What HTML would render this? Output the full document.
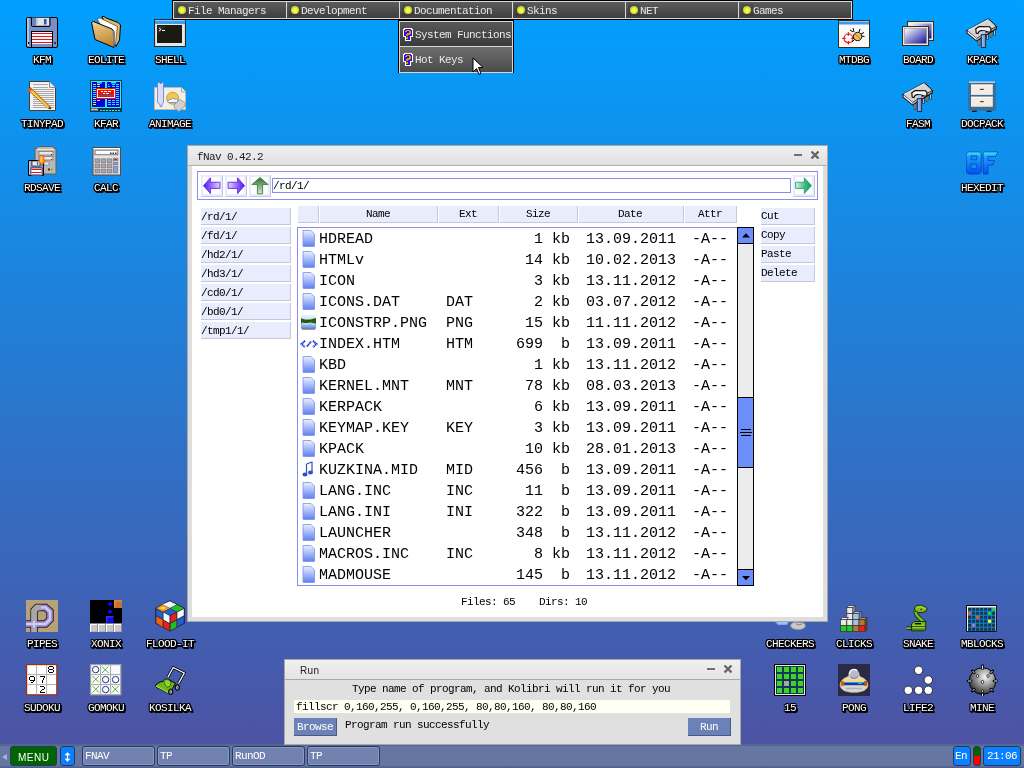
<!DOCTYPE html><html><head><meta charset="utf-8"><style>
*{margin:0;padding:0;box-sizing:border-box}
html,body{width:1024px;height:768px;overflow:hidden}
body{position:relative;background:linear-gradient(to bottom, rgb(0,160,255) 0px, rgb(80,80,160) 768px);font-family:"Liberation Mono", monospace;}
.a{position:absolute}
.a svg,.ic svg{display:block}
.lt,.ttl,.t,.mt,.tbt,.lbl,.aa{will-change:transform}
.t{position:absolute;font-family:"Liberation Mono", monospace;font-size:11px;line-height:11px;letter-spacing:-0.6px;white-space:pre}
.lbl{position:absolute;font-family:"Liberation Mono", monospace;font-size:11px;line-height:11px;letter-spacing:-0.6px;white-space:pre;color:#fff;
 text-shadow:1px 1px 0 #000,-1px -1px 0 #000,1px -1px 0 #000,-1px 1px 0 #000,1px 0 0 #000,-1px 0 0 #000,0 1px 0 #000,0 -1px 0 #000,1px 2px 0 #000,0 2px 0 #000,2px 2px 0 #000,2px 1px 0 #000}
.ic{position:absolute;width:32px;height:32px}
</style></head><body>
<div class="ic" style="left:26px;top:16px"><svg width="32" height="32" viewBox="0 0 32 32"><path d="M2 1.5h28a1.5 1.5 0 0 1 1.5 1.5v27a1.5 1.5 0 0 1 -1.5 1.5h-28a1.5 1.5 0 0 1 -1.5 -1.5v-27a1.5 1.5 0 0 1 1.5 -1.5z" fill="#7890c8" stroke="#000"/>
<rect x="1" y="2" width="2" height="28" fill="#b0c4f0"/>
<path d="M5.5 1.5v8a1 1 0 0 0 1 1h16.5a1 1 0 0 0 1 -1v-8" fill="#6a86c0" stroke="#000"/>
<rect x="10" y="2" width="13" height="7.5" fill="#e4e4e4"/><rect x="10" y="2" width="2" height="7.5" fill="#c8c8c8"/>
<rect x="18" y="3" width="2.5" height="5.5" fill="#2858a8"/>
<rect x="5.5" y="15.5" width="21" height="16" fill="#f4faff" stroke="#000"/>
<g fill="#f01010"><rect x="6" y="17" width="20" height="1"/><rect x="6" y="20" width="20" height="1"/><rect x="6" y="23" width="20" height="1"/><rect x="6" y="26" width="20" height="1"/></g>
<rect x="6" y="28" width="20" height="3" fill="#7890c8"/>
<rect x="2" y="26" width="1.2" height="2" fill="#000"/><rect x="28.5" y="26" width="1.2" height="2" fill="#000"/></svg></div>
<div class="lbl" style="left:33px;top:55px">KFM</div>
<div class="ic" style="left:90px;top:16px"><svg width="32" height="32" viewBox="0 0 32 32"><defs><linearGradient id="fgr" x1="0" y1="0" x2="0.3" y2="1"><stop offset="0" stop-color="#f4d490"/><stop offset="1" stop-color="#c08838"/></linearGradient></defs><path d="M12 0.5 L14 0.5 L16 2 L28 6.5 L30.5 9 L29.5 24 L26 30.5 Z" fill="#e8b860" stroke="#000"/>
<path d="M7 2.5 L10 2 L27.5 10.5 L25.5 28 L22 31 Z" fill="#f8f8e8" stroke="#555" stroke-width="0.8"/>
<path d="M9 3 L26 11 L25 20 Z" fill="#ffffff"/>
<path d="M1.5 6.5 L3.5 5.5 L22 13 L24 15.5 L24 31.5 L5 23.5 Z" fill="url(#fgr)" stroke="#000"/>
<path d="M23 14.5 L24 31" stroke="#8888a0" stroke-width="1"/></svg></div>
<div class="lbl" style="left:88px;top:55px">EOLITE</div>
<div class="ic" style="left:154px;top:16px"><svg width="32" height="32" viewBox="0 0 32 32"><rect x="0.5" y="3.5" width="31" height="27" fill="#d8d8d8" stroke="#2a2a2a"/>
<rect x="1" y="4" width="30" height="1" fill="#f8f8f8"/>
<rect x="1" y="4" width="30" height="4" fill="#3aa0f0"/><rect x="1" y="4" width="30" height="1" fill="#80c8ff"/>
<rect x="2" y="8" width="28" height="22" fill="#e8e8e8"/>
<rect x="3" y="9" width="25" height="18" fill="#1a1a12"/>
<path d="M4 10 L12 10 L4 18 Z" fill="#3a3a34" opacity="0.6"/>
<path d="M5 12 L7 13.5 L5 15" stroke="#fff" fill="none" stroke-width="0.9"/><rect x="8" y="14" width="3" height="1" fill="#fff"/></svg></div>
<div class="lbl" style="left:155px;top:55px">SHELL</div>
<div class="ic" style="left:26px;top:80px"><svg width="32" height="32" viewBox="0 0 32 32"><path d="M3.5 1.5h20l6 6v23h-26z" fill="#f4f0f4" stroke="#4a3a2a"/>
<path d="M23.5 1.5v6h6" fill="#e8e8e8" stroke="#807080" stroke-width="0.8"/>
<g stroke="#a0a0a0" stroke-width="0.9"><path d="M7 4.5h15M7 7.5h15M7 9.5h21M7 11.5h21M7 13.5h21M7 15.5h21M7 17.5h21M7 19.5h21M7 21.5h21M7 23.5h21M7 25.5h21M7 27.5h21"/></g>
<path d="M2 10 L4.5 7.5 L24 26.5 L25 29 L22.5 28.5 Z" fill="#f8b020" stroke="#a05010" stroke-width="0.8"/>
<path d="M4 10 L22 27.5" stroke="#fff080" stroke-width="1"/>
<path d="M1.5 10.5 L4.5 7.5 L6.5 9.5 L3.5 12.5Z" fill="#e05a30"/><path d="M22.5 28.5 L25 29 L24 26.5Z" fill="#202020"/></svg></div>
<div class="lbl" style="left:21px;top:119px">TINYPAD</div>
<div class="ic" style="left:90px;top:80px"><svg width="32" height="32" viewBox="0 0 32 32"><rect x="0" y="0" width="32" height="32" fill="#0a3a48"/>
<rect x="1" y="1" width="30" height="27" fill="#20f0f0"/>
<rect x="2" y="2" width="13" height="25" fill="#0000e8"/><rect x="17" y="2" width="13" height="25" fill="#0000e8"/>
<path d="M7 2h5v1.5h-5z M21 2h5v1.5h-5z" fill="#20f0f0"/>
<g fill="#f8e800"><rect x="3" y="4" width="3" height="1"/><rect x="7" y="4" width="3" height="1"/><rect x="7" y="6" width="3" height="1"/><rect x="3" y="10" width="3" height="1"/><rect x="3" y="18" width="3" height="1"/><rect x="7" y="20" width="3" height="1"/><rect x="3" y="22" width="3" height="1"/><rect x="3" y="24" width="3" height="1"/></g>
<g fill="#20f0f0"><rect x="3" y="6" width="3" height="1"/><rect x="3" y="8" width="3" height="1"/><rect x="3" y="12" width="3" height="1"/><rect x="3" y="14" width="3" height="1"/><rect x="3" y="16" width="3" height="1"/><rect x="3" y="20" width="3" height="1"/>
<rect x="18" y="4" width="1" height="1"/><rect x="22" y="4" width="3" height="1"/><rect x="26" y="4" width="3" height="1"/><rect x="18" y="6" width="2" height="1"/><rect x="22" y="6" width="3" height="1"/><rect x="26" y="6" width="3" height="1"/>
<rect x="26" y="8" width="3" height="1"/><rect x="26" y="10" width="3" height="1"/><rect x="26" y="12" width="3" height="1"/><rect x="26" y="14" width="3" height="1"/><rect x="26" y="16" width="3" height="1"/><rect x="26" y="18" width="3" height="1"/>
<rect x="18" y="20" width="3" height="1"/><rect x="22" y="20" width="3" height="1"/><rect x="26" y="20" width="3" height="1"/><rect x="18" y="22" width="3" height="1"/><rect x="22" y="22" width="3" height="1"/><rect x="26" y="22" width="3" height="1"/><rect x="18" y="24" width="3" height="1"/><rect x="22" y="24" width="3" height="1"/><rect x="26" y="24" width="3" height="1"/></g>
<rect x="6" y="8" width="20" height="11" fill="#f01010"/>
<rect x="7.5" y="9.5" width="17" height="8" fill="none" stroke="#fff" stroke-width="1"/><rect x="10" y="9" width="12" height="1" fill="#f8e800"/>
<g fill="#fff"><rect x="11" y="11" width="2" height="1"/><rect x="14" y="11" width="3" height="1"/><rect x="18" y="11" width="3" height="1"/><rect x="13" y="13" width="2" height="1"/><rect x="16" y="13" width="3" height="1"/></g>
<g fill="#108080"><rect x="9" y="15" width="4" height="1"/><rect x="14" y="15" width="4" height="1"/><rect x="19" y="15" width="4" height="1"/></g>
<g fill="#20f0f0"><rect x="10" y="30" width="2" height="1"/><rect x="13" y="30" width="2" height="1"/><rect x="16" y="30" width="2" height="1"/><rect x="19" y="30" width="2" height="1"/><rect x="22" y="30" width="2" height="1"/><rect x="25" y="30" width="2" height="1"/><rect x="28" y="30" width="2" height="1"/></g>
<path d="M1 28.5h7v2h-7z" fill="#e0e0e0" opacity="0.8"/></svg></div>
<div class="lbl" style="left:94px;top:119px">KFAR</div>
<div class="ic" style="left:154px;top:80px"><svg width="32" height="32" viewBox="0 0 32 32"><path d="M0.5 7.5h27l4 4v18h-31z" fill="#f0f0e8" stroke="#c8b8a8"/>
<path d="M27.5 7.5v4.5h4" fill="#e8e8e8" stroke="#a0a0a0" stroke-width="0.8"/>
<circle cx="18.6" cy="18.2" r="6" fill="#f0c850" stroke="#b8a020" stroke-width="0.9"/>
<path d="M14 21 q1 -2 3 -1.5 q1.5 -2 3.5 -0.5 q2 -1 3 1 q1 1 -0.5 2.5 h-8.5 q-1.5 -0.5 -0.5 -1.5z" fill="#f4f8ff" stroke="#6080d0" stroke-width="0.8"/>
<path d="M20 25 L26 19.5 L31.5 23 L31 26 L25 31.5 L20.5 28 Z" fill="#d0d0d0" stroke="#909090" stroke-width="0.8"/>
<path d="M3.5 2.5 h2.5 v1 h1.5 v-1 h2 v20 l-1.5 2 v2 h-2 v-2 l-2.5 -2 z" fill="#d8dcf8" stroke="#6878d8" stroke-width="0.8"/></svg></div>
<div class="lbl" style="left:149px;top:119px">ANIMAGE</div>
<div class="ic" style="left:26px;top:144px"><svg width="32" height="32" viewBox="0 0 32 32"><path d="M12.5 2.5h14l2 2h1.5v25.5h-21v-25.5h1.5z" fill="#b8b8b8" stroke="#6a5a4a"/>
<rect x="11" y="5" width="17" height="1" fill="#e8e8e8"/>
<rect x="13" y="7.5" width="14" height="3.5" fill="#e8e8e8" stroke="#707070" stroke-width="0.7"/><rect x="25" y="10" width="1" height="1" fill="#901010"/>
<rect x="13" y="12.5" width="14" height="3.5" fill="#e8e8e8" stroke="#707070" stroke-width="0.7"/><rect x="25" y="15" width="1" height="1" fill="#901010"/>
<rect x="18" y="18" width="5" height="3" fill="#f0f0f0" stroke="#707070" stroke-width="0.6"/>
<rect x="22" y="24.5" width="2" height="2" fill="#8a1010"/><rect x="25" y="24.5" width="2" height="2" fill="#30e030"/>
<path d="M2.5 16.5h15v15h-15z" fill="#7890d0" stroke="#000"/>
<rect x="3" y="17" width="1.5" height="14" fill="#b0c4f0"/>
<rect x="6" y="17" width="8" height="5" fill="#e8e8e8" stroke="#000" stroke-width="0.6"/><rect x="11" y="18" width="1.2" height="3" fill="#3060b0"/>
<rect x="5" y="24" width="11" height="7.5" fill="#fff" stroke="#000" stroke-width="0.6"/>
<g fill="#f01010"><rect x="5.5" y="25" width="10" height="1"/><rect x="5.5" y="28" width="10" height="1"/></g><rect x="5.5" y="30" width="10" height="1.5" fill="#7890d0"/>
<path d="M14 11.8h3.8v4.5h2l-3.9 4.5l-3.9 -4.5h2z" fill="#f8a820" stroke="#f05010" stroke-width="0.8"/><path d="M15 12.5v5" stroke="#fff8c0" stroke-width="0.8"/></svg></div>
<div class="lbl" style="left:24px;top:183px">RDSAVE</div>
<div class="ic" style="left:90px;top:144px"><svg width="32" height="32" viewBox="0 0 32 32"><rect x="3" y="3.5" width="27.5" height="27.5" fill="#e4e4e4" stroke="#5a4a3a"/>
<rect x="3.5" y="4" width="26.5" height="1" fill="#fafafa"/>
<rect x="5" y="6.2" width="22.8" height="4.5" fill="#fff" stroke="#7a7080" stroke-width="1"/>
<path d="M20 8.5h1.5v1.5h-1.5zM22.5 8.5h1.5v1.5h-1.5zM25 8.5h1.5v1.5h-1.5z" fill="#303030"/>
<g fill="#a8a8a8" stroke="#7a7080" stroke-width="0.7"><rect x="5" y="14.9" width="4.7" height="3.7"/><rect x="11.1" y="14.9" width="4.7" height="3.7"/><rect x="17.2" y="14.9" width="4.7" height="3.7"/>
<rect x="5" y="20" width="4.7" height="3.8"/><rect x="11.1" y="20" width="4.7" height="3.8"/><rect x="17.2" y="20" width="4.7" height="3.8"/>
<rect x="5" y="25.2" width="4.7" height="3.7"/><rect x="11.1" y="25.2" width="4.7" height="3.7"/><rect x="17.2" y="25.2" width="4.7" height="3.7"/></g>
<rect x="23.3" y="14.2" width="4.5" height="2.5" fill="#a8a8a8" stroke="#7a7080" stroke-width="0.7"/><rect x="24.3" y="15" width="2.5" height="1" fill="#f01010"/>
<rect x="23.3" y="18.2" width="4.5" height="2.5" fill="#88a0d0" stroke="#7a7080" stroke-width="0.7"/>
<rect x="23.3" y="22.1" width="4.5" height="6.8" fill="#88a0d0" stroke="#7a7080" stroke-width="0.7"/></svg></div>
<div class="lbl" style="left:94px;top:183px">CALC</div>
<div class="ic" style="left:838px;top:16px"><svg width="32" height="32" viewBox="0 0 32 32"><rect x="0.5" y="4.5" width="31" height="27" fill="#fafafa" stroke="#3a2a1a"/>
<rect x="1" y="5" width="30" height="3.5" fill="#3a9cf0"/><rect x="1" y="5" width="30" height="1" fill="#8ac8ff"/>
<circle cx="10.4" cy="22.4" r="4.4" fill="#fff" stroke="#f01010" stroke-width="1.1"/>
<path d="M10.4 16.3v3.4M10.4 25.1v3.4M4.3 22.4h3.4M13.1 22.4h3.4" stroke="#f01010" stroke-width="1.3"/>
<path d="M12 14 L15 16 M15 12 L16 16 M22 13 L21 16 M26 16.5 L23 18 M26.5 20.5 L23.5 20 M14 26 L17 23" stroke="#000" stroke-width="1"/>
<circle cx="19.6" cy="20.5" r="4.2" fill="#e8c060" stroke="#000" stroke-width="0.9"/>
<path d="M17 18 L22.5 23" stroke="#a06020" stroke-width="0.8"/></svg></div>
<div class="lbl" style="left:839px;top:55px">MTDBG</div>
<div class="ic" style="left:902px;top:16px"><svg width="32" height="32" viewBox="0 0 32 32"><defs><linearGradient id="bd1" x1="0" y1="0" x2="1" y2="1"><stop offset="0" stop-color="#ffffff"/><stop offset="1" stop-color="#1010a0"/></linearGradient></defs><rect x="5.5" y="5.5" width="26" height="19" fill="#e8e8e0" stroke="#3a2a20"/>
<rect x="7.5" y="7.5" width="22" height="15" fill="url(#bd1)"/>
<rect x="0.5" y="10.5" width="26" height="19" fill="#e8e8e0" stroke="#3a2a20"/>
<rect x="2.5" y="12.5" width="22" height="15" fill="url(#bd1)" stroke="#888" stroke-width="0.5"/></svg></div>
<div class="lbl" style="left:903px;top:55px">BOARD</div>
<div class="ic" style="left:966px;top:16px"><svg width="32" height="32" viewBox="0 0 32 32"><path d="M0.5 14.2 L22.4 2.2 L30.8 10.2 L30.8 13.2 L10.7 25.5 L0.5 17.2 Z" fill="#000"/>
<path d="M1.5 14.5 L22.4 3.2 L29.8 10.3 L10.7 22 Z" fill="#d4d4d4"/>
<path d="M1.5 15 L10.7 22.5 L10.7 24.5 L1.5 17 Z" fill="#f4f4f4"/>
<path d="M10.7 22.5 L29.8 11 L29.8 12.5 L10.7 24.5 Z" fill="#a8a8a8"/>
<path d="M2 14.3 L22.4 3.4" stroke="#fafafa" stroke-width="0.9"/>
<g stroke="#202020" stroke-width="2.4"><path d="M13 24 V29.5 M21.5 19 V23.5 M25 16.8 V21.5 M28.5 14.5 V19.5"/></g>
<g stroke="#b8b8b8" stroke-width="1.1"><path d="M13 24 V29 M21.5 19 V23 M25 16.8 V21 M28.5 14.5 V19"/></g>
<path d="M10.2 17 L9.8 12.8 L13 10.5 L23.5 10.8 L25 12.5 L24.8 15.8 L22 16 L19.5 15 L15 14.5 L13 15.5 L12 17.5 Z" fill="#f0f0f0" stroke="#000" stroke-width="1.1"/>
<path d="M12 13 L23 12.5" stroke="#ffffff" stroke-width="1"/>
<rect x="15.8" y="15.2" width="3.3" height="3.6" fill="#c0c0c8"/>
<rect x="15.3" y="18.6" width="4.3" height="12.9" fill="#7898e0" stroke="#1a2a40" stroke-width="0.9"/>
<rect x="16.3" y="19.5" width="1" height="11" fill="#a8c0f8"/></svg></div>
<div class="lbl" style="left:967px;top:55px">KPACK</div>
<div class="ic" style="left:902px;top:80px"><svg width="32" height="32" viewBox="0 0 32 32"><path d="M0.5 14.2 L22.4 2.2 L30.8 10.2 L30.8 13.2 L10.7 25.5 L0.5 17.2 Z" fill="#000"/>
<path d="M1.5 14.5 L22.4 3.2 L29.8 10.3 L10.7 22 Z" fill="#d4d4d4"/>
<path d="M1.5 15 L10.7 22.5 L10.7 24.5 L1.5 17 Z" fill="#f4f4f4"/>
<path d="M10.7 22.5 L29.8 11 L29.8 12.5 L10.7 24.5 Z" fill="#a8a8a8"/>
<path d="M2 14.3 L22.4 3.4" stroke="#fafafa" stroke-width="0.9"/>
<g stroke="#202020" stroke-width="2.4"><path d="M13 24 V29.5 M21.5 19 V23.5 M25 16.8 V21.5 M28.5 14.5 V19.5"/></g>
<g stroke="#b8b8b8" stroke-width="1.1"><path d="M13 24 V29 M21.5 19 V23 M25 16.8 V21 M28.5 14.5 V19"/></g>
<path d="M10.2 17 L9.8 12.8 L13 10.5 L23.5 10.8 L25 12.5 L24.8 15.8 L22 16 L19.5 15 L15 14.5 L13 15.5 L12 17.5 Z" fill="#f0f0f0" stroke="#000" stroke-width="1.1"/>
<path d="M12 13 L23 12.5" stroke="#ffffff" stroke-width="1"/>
<rect x="15.8" y="15.2" width="3.3" height="3.6" fill="#c0c0c8"/>
<rect x="15.3" y="18.6" width="4.3" height="12.9" fill="#7898e0" stroke="#1a2a40" stroke-width="0.9"/>
<rect x="16.3" y="19.5" width="1" height="11" fill="#a8c0f8"/></svg></div>
<div class="lbl" style="left:906px;top:119px">FASM</div>
<div class="ic" style="left:966px;top:80px"><svg width="32" height="32" viewBox="0 0 32 32"><rect x="2.2" y="1.5" width="27.7" height="29.3" fill="#3a6e98"/>
<rect x="3" y="1.3" width="26" height="1.7" fill="#b8cce0"/>
<rect x="5" y="4.6" width="21.8" height="10.3" fill="#f4ece0"/><rect x="5" y="4.6" width="21.8" height="1" fill="#ffffff"/>
<rect x="5" y="16.75" width="21.8" height="10" fill="#f4ece0"/><rect x="5" y="16.75" width="21.8" height="1" fill="#ffffff"/>
<rect x="13.9" y="8.8" width="4" height="1.3" rx="0.6" fill="#404858"/><rect x="13.9" y="20.9" width="4" height="1.3" rx="0.6" fill="#404858"/>
<rect x="6" y="30.8" width="4.7" height="1" fill="#000"/><rect x="20.7" y="30.8" width="4.8" height="1" fill="#000"/></svg></div>
<div class="lbl" style="left:961px;top:119px">DOCPACK</div>
<div class="ic" style="left:966px;top:144px"><svg width="32" height="32" viewBox="0 0 32 32"><defs><linearGradient id="hx" x1="0" y1="0" x2="0" y2="1"><stop offset="0" stop-color="#40f0f0"/><stop offset="0.2" stop-color="#20a0ff"/><stop offset="1" stop-color="#0050f0"/></linearGradient></defs><path d="M2.3 8 H13.3 L15.3 10 V17 L14.3 18 L15.3 19 V28 L13.3 30 H2.3 L0.3 28 V19 L1.3 18 L0.3 17 V10 Z M5 11.8 V15.8 H10.9 V11.8 Z M5 20 V24.7 H10.9 V20 Z" fill="url(#hx)" fill-rule="evenodd" stroke="#0030b0" stroke-width="0.6"/>
<path d="M18.2 8 H31.75 L29.5 12.5 H22 V16.5 H28.5 L27 21 H22 V30 H17.2 V9 Z" fill="url(#hx)" stroke="#0030b0" stroke-width="0.6"/></svg></div>
<div class="lbl" style="left:961px;top:183px">HEXEDIT</div>
<div class="ic" style="left:26px;top:600px"><svg width="32" height="32" viewBox="0 0 32 32"><rect x="0" y="0" width="32" height="32" fill="#b8a078"/>
<path d="M0 24 H19.5 L24 19.5 V11.5 L19.5 7.5 H11 L8.1 10.5 V32" fill="none" stroke="#202020" stroke-width="7.5" stroke-linejoin="miter"/>
<path d="M0 24 H19.5 L24 19.5 V11.5 L19.5 7.5 H11 L8.1 10.5 V32" fill="none" stroke="#a890e0" stroke-width="5.5" stroke-linejoin="miter"/>
<path d="M0 24 H19.5 L24 19.5 V11.5 L19.5 7.5 H11 L8.1 10.5 V32" fill="none" stroke="#d0d0f0" stroke-width="2" stroke-linejoin="miter"/>
<path d="M15 7.5 H11 L8.1 10.5 V21" fill="none" stroke="#a8a8a8" stroke-width="5.5"/>
<path d="M8.1 27.5 V32" fill="none" stroke="#a8a8a8" stroke-width="5.5"/></svg></div>
<div class="lbl" style="left:27px;top:639px">PIPES</div>
<div class="ic" style="left:90px;top:600px"><svg width="32" height="32" viewBox="0 0 32 32"><rect width="32" height="23.5" fill="#000"/>
<rect x="24" y="0" width="8" height="8" fill="#c07830"/><path d="M24 0h8l-1.5 1.5h-5v5l-1.5 1.5z" fill="#f08040"/>
<circle cx="20" cy="3.9" r="2" fill="#0a0af8"/><circle cx="20" cy="11.8" r="2" fill="#0a0af8"/>
<rect x="16" y="16" width="7.8" height="7.5" fill="#1010c8"/><path d="M16 16h7.8l-1.5 1.5h-4.8v4.8l-1.5 1.2z" fill="#3030ff"/>
<rect y="23.5" width="32" height="8.3" fill="#c8c8c8"/>
<g fill="#fff"><rect x="0" y="24" width="32" height="1"/><rect x="0" y="24" width="1" height="8"/><rect x="8" y="24" width="1" height="8"/><rect x="16" y="24" width="1" height="8"/><rect x="24" y="24" width="1" height="8"/></g>
<g fill="#909090"><rect x="7" y="24" width="1" height="8"/><rect x="15" y="24" width="1" height="8"/><rect x="23" y="24" width="1" height="8"/><rect x="31" y="24" width="1" height="8"/></g></svg></div>
<div class="lbl" style="left:91px;top:639px">XONIX</div>
<div class="ic" style="left:154px;top:600px"><svg width="32" height="32" viewBox="0 0 32 32"><path d="M15.8 0.3 L30.8 8 L30.8 23.5 L16 31.5 L1.3 23.5 L1.3 8 Z" fill="#2a1a2a"/>
<path d="M15.8 1.3 L22.5 4.6 L15.9 8 L8.5 4.6 Z" fill="#e8f8ff"/>
<path d="M8.5 4.8 L15.8 8.2 L9 11.7 L2.3 8.2 Z" fill="#f8a010"/><path d="M6 8 L9 6.8 L12 8 L9 9.2Z" fill="#ffe060"/>
<path d="M22.8 4.8 L29.8 8.2 L22.8 11.7 L16.2 8.2 Z" fill="#20c020"/>
<path d="M15.9 8.5 L22.5 12 L16 15.2 L9.3 12 Z" fill="#2060d0"/>
<path d="M2.3 9 L8.7 12.2 L8.7 19 L2.3 15.5 Z" fill="#2060d0"/>
<path d="M9.5 12.6 L15.5 15.7 L15.5 23 L9.5 19.7 Z" fill="#f0faff"/>
<path d="M2.3 16.3 L8.7 19.7 L8.7 27 L2.3 23 Z" fill="#f06010"/>
<path d="M9.5 20.5 L15.5 23.7 L15.5 30.5 L9.5 27.2 Z" fill="#e82020"/>
<path d="M16.5 15.7 L22.5 12.6 L22.5 19.7 L16.5 23 Z" fill="#e82020"/>
<path d="M23.3 12.2 L29.8 9 L29.8 15.5 L23.3 19 Z" fill="#f0faff"/>
<path d="M16.5 23.7 L22.5 20.5 L22.5 27.2 L16.5 30.5 Z" fill="#20c020"/>
<path d="M23.3 19.7 L29.8 16.3 L29.8 23 L23.3 26.8 Z" fill="#2060d0"/></svg></div>
<div class="lbl" style="left:146px;top:639px">FLOOD-IT</div>
<div class="ic" style="left:26px;top:664px"><svg width="32" height="32" viewBox="0 0 32 32"><rect x="0.6" y="0.6" width="30.2" height="30.2" fill="#fff" stroke="#a03008" stroke-width="1.2"/>
<path d="M10.6 1.2v29M20.6 1.2v29M1.2 10.6h29M1.2 20.6h29" stroke="#b0b0b0" stroke-width="1"/>
<g fill="#000" shape-rendering="crispEdges">
<path d="M23 2h4v1h1v2h-1v1h1v2h-1v1h-4v-1h-1v-2h1v-1h-1v-2h1z M23 3v2h4v-2z M23 6v2h4v-2z" fill-rule="evenodd"/>
<path d="M4 12h4v1h1v4h-1v1h-1v1h-2v-1h2v-1h-3v-1h-1v-3h1z M4 13v3h4v-3z" fill-rule="evenodd"/>
<path d="M14 12h5v2h-1v2h-1v3h-1v-3h1v-2h1v-1h-4z"/>
<path d="M14 22h4v1h1v2h-1v1h-2v1h-1v1h4v1h-5v-2h1v-1h1v-1h2v-2h-4z"/>
</g></svg></div>
<div class="lbl" style="left:24px;top:703px">SUDOKU</div>
<div class="ic" style="left:90px;top:664px"><svg width="32" height="32" viewBox="0 0 32 32"><rect x="0.6" y="0.6" width="30.2" height="30.2" fill="#fafafa" stroke="#a0a0a0" stroke-width="1.2"/>
<path d="M10.6 1.2v29M20.6 1.2v29M1.2 10.6h29M1.2 20.6h29" stroke="#a8a8a8" stroke-width="1"/>
<g fill="none" stroke="#203c90" stroke-width="1"><circle cx="5.6" cy="5.6" r="3.2"/><circle cx="15.6" cy="15.6" r="3.2"/><circle cx="25.6" cy="15.6" r="3.2"/><circle cx="15.6" cy="25.6" r="3.2"/></g>
<g stroke="#40a828" stroke-width="0.9"><path d="M12 2.5l6.5 6.5M18.5 2.5l-6.5 6.5M2.5 12l6.5 6.5M9 12l-6.5 6.5M2.5 22l6.5 6.5M9 22l-6.5 6.5M22 22l6.5 6.5M28.5 22l-6.5 6.5"/></g></svg></div>
<div class="lbl" style="left:88px;top:703px">GOMOKU</div>
<div class="ic" style="left:154px;top:664px"><svg width="32" height="32" viewBox="0 0 32 32"><path d="M14 13 L19.2 3.5 L30.3 9 L24.5 19.5" fill="none" stroke="#000" stroke-width="2.8"/>
<path d="M14 13 L19.2 3.5 L30.3 9 L24.5 19.5" fill="none" stroke="#ffffff" stroke-width="1.3"/>
<path d="M1.5 21 L6 18 L9 17.5 L11 15 L15 15.5 L18 17.5 L21.5 19 L18.5 24.5 L15 28.5 L13.5 29 L2 23 Z" fill="#70b818" stroke="#000" stroke-width="1"/>
<path d="M2 22 L14 28.5 L16 26" stroke="#a8e040" stroke-width="1.2" fill="none"/>
<path d="M10 16 L14 15.5 L17 18 L16.5 22 L13 23.5 L10.5 20 Z" fill="#90d030" stroke="#206010" stroke-width="0.8"/>
<ellipse cx="16.75" cy="27.8" rx="2.2" ry="2.8" fill="#303030" stroke="#000"/><ellipse cx="16.75" cy="27.8" rx="0.8" ry="1.6" fill="none" stroke="#e0e0e0" stroke-width="0.8"/>
<ellipse cx="23.3" cy="23.5" rx="2.2" ry="2.8" fill="#303030" stroke="#000"/><ellipse cx="23.3" cy="23.5" rx="0.8" ry="1.6" fill="none" stroke="#e0e0e0" stroke-width="0.8"/></svg></div>
<div class="lbl" style="left:149px;top:703px">KOSILKA</div>
<div class="ic" style="left:774px;top:600px"><svg width="32" height="32" viewBox="0 0 32 32"><path d="M1 22 L4 21 H13 L15 22 L13 25 H4Z" fill="#80a8f0"/><path d="M4 23 H13" stroke="#c0d8ff"/>
<ellipse cx="24" cy="25.7" rx="7.5" ry="4" fill="#c8c8c8" stroke="#8a8a8a" stroke-width="0.8"/>
<ellipse cx="25" cy="23.5" rx="3" ry="1.3" fill="none" stroke="#807070" stroke-width="0.8"/></svg></div>
<div class="lbl" style="left:766px;top:639px">CHECKERS</div>
<div class="ic" style="left:838px;top:600px"><svg width="32" height="32" viewBox="0 0 32 32"><g stroke="#3a3a3a" stroke-width="0.8">
<path d="M8.8 7.5 L11 5.5 H17 L15 7.5Z" fill="#f0f0f0"/><path d="M15 7.5 L17 5.5 V11 L15 13Z" fill="#c0c0c0"/>
<rect x="8.8" y="7.5" width="6" height="6" fill="#e8e8e8"/>
<rect x="8.8" y="13.5" width="6" height="6" fill="#e8e8e8"/>
<path d="M14.8 13.5 L17 11.5 H23 L21 13.5Z" fill="#b8d0f0"/><path d="M21 13.5 L23 11.5 V17.5 L21 19.5Z" fill="#90b0e0"/>
<rect x="14.8" y="13.5" width="6.2" height="6" fill="#a8c0e8"/>
<path d="M2.5 19.5 L4.5 17.5 H10.5 L8.8 19.5Z" fill="#f0f0f0"/>
<rect x="2.5" y="19.5" width="6.3" height="6" fill="#e8e8e8"/><rect x="8.8" y="19.5" width="6" height="6" fill="#e8e8e8"/>
<rect x="14.8" y="19.5" width="6.2" height="6" fill="#a8c0e8"/>
<path d="M21 19.5 L23 17.5 H29 L27 19.5Z" fill="#c89050"/><path d="M27 19.5 L29 17.5 V23.5 L27 25.5Z" fill="#804818"/>
<rect x="21" y="19.5" width="6" height="6" fill="#b07838"/>
<rect x="2.5" y="25.5" width="6.3" height="6" fill="#20d020"/><rect x="8.8" y="25.5" width="6" height="6" fill="#20d020"/>
<rect x="14.8" y="25.5" width="6.2" height="6" fill="#b07838"/>
<rect x="21" y="25.5" width="6" height="6" fill="#f02010"/><path d="M27 25.5 L29 23.5 V29.5 L27 31.5Z" fill="#c01010"/>
</g></svg></div>
<div class="lbl" style="left:836px;top:639px">CLICKS</div>
<div class="ic" style="left:902px;top:600px"><svg width="32" height="32" viewBox="0 0 32 32"><path d="M4.5 28.2 H10" stroke="#1a3000" stroke-width="3.4"/><path d="M4.5 28.2 H10" stroke="#80c828" stroke-width="1.6"/>
<path d="M13.5 11 C13.5 14 15 16 18 18.5 L22.5 22.5" fill="none" stroke="#1a3000" stroke-width="4.2"/>
<path d="M13.5 11 C13.5 14 15 16 18 18.5 L22.5 22.5" fill="none" stroke="#78c020" stroke-width="2.4"/>
<path d="M9.5 24 L12 21.5 H23.8 V29 L22.5 30.8 H9.5 Z" fill="#70b818" stroke="#1a3000" stroke-width="1"/>
<path d="M10 26.5 H23 M10 29 H23" stroke="#2a4a08" stroke-width="0.9"/>
<path d="M10.5 25.2 H22.5 M10.5 27.8 H22.5" stroke="#b0e040" stroke-width="0.9"/>
<rect x="13" y="23" width="6" height="1.4" fill="#000"/>
<path d="M12.5 8 L14.5 5.5 L18.5 5 L23.5 6.8 L25 8.8 L24 11 L20.5 12.5 L16.5 12.5 L13 11 Z" fill="#78c020" stroke="#1a3000" stroke-width="1"/>
<path d="M15 7.5 L20 7 L23 8.5" stroke="#a8e040" stroke-width="0.9" fill="none"/>
<circle cx="19.1" cy="9.5" r="1.1" fill="#e01010"/><rect x="22.5" y="8" width="1" height="1" fill="#f0e040"/></svg></div>
<div class="lbl" style="left:903px;top:639px">SNAKE</div>
<div class="ic" style="left:966px;top:600px"><svg width="32" height="32" viewBox="0 0 32 32"><rect x="0.1" y="5" width="30.7" height="26.75" fill="#000"/>
<rect x="1" y="6" width="29" height="25" fill="#f0f0f0"/>
<rect x="2" y="7.5" width="27.5" height="23.5" fill="#1080e0"/><rect x="2.1" y="7.8" width="3" height="3" fill="#183a40"/><rect x="2.1" y="11.8" width="3" height="3" fill="#ff5010"/><rect x="2.1" y="15.8" width="3" height="3" fill="#183a40"/><rect x="2.1" y="19.8" width="3" height="3" fill="#183a40"/><rect x="2.1" y="23.8" width="3" height="3" fill="#183a40"/><rect x="2.1" y="27.8" width="3" height="3" fill="#183a40"/><rect x="6.1" y="7.8" width="3" height="3" fill="#183a40"/><rect x="6.1" y="11.8" width="3" height="3" fill="#183a40"/><rect x="6.1" y="15.8" width="3" height="3" fill="#183a40"/><rect x="6.1" y="19.8" width="3" height="3" fill="#183a40"/><rect x="6.1" y="23.8" width="3" height="3" fill="#c070a0"/><rect x="6.1" y="27.8" width="3" height="3" fill="#183a40"/><rect x="10.1" y="7.8" width="3" height="3" fill="#183a40"/><rect x="10.1" y="11.8" width="3" height="3" fill="#183a40"/><rect x="10.1" y="15.8" width="3" height="3" fill="#ff5010"/><rect x="10.1" y="19.8" width="3" height="3" fill="#183a40"/><rect x="10.1" y="23.8" width="3" height="3" fill="#183a40"/><rect x="10.1" y="27.8" width="3" height="3" fill="#183a40"/><rect x="14.1" y="7.8" width="3" height="3" fill="#183a40"/><rect x="14.1" y="11.8" width="3" height="3" fill="#183a40"/><rect x="14.1" y="15.8" width="3" height="3" fill="#183a40"/><rect x="14.1" y="19.8" width="3" height="3" fill="#183a40"/><rect x="14.1" y="23.8" width="3" height="3" fill="#183a40"/><rect x="14.1" y="27.8" width="3" height="3" fill="#183a40"/><rect x="18.1" y="7.8" width="3" height="3" fill="#183a40"/><rect x="18.1" y="11.8" width="3" height="3" fill="#183a40"/><rect x="18.1" y="15.8" width="3" height="3" fill="#183a40"/><rect x="18.1" y="19.8" width="3" height="3" fill="#183a40"/><rect x="18.1" y="23.8" width="3" height="3" fill="#183a40"/><rect x="18.1" y="27.8" width="3" height="3" fill="#183a40"/><rect x="22.1" y="7.8" width="3" height="3" fill="#183a40"/><rect x="22.1" y="11.8" width="3" height="3" fill="#30d020"/><rect x="22.1" y="15.8" width="3" height="3" fill="#183a40"/><rect x="22.1" y="19.8" width="3" height="3" fill="#ffff00"/><rect x="22.1" y="23.8" width="3" height="3" fill="#183a40"/><rect x="22.1" y="27.8" width="3" height="3" fill="#183a40"/><rect x="26.1" y="7.8" width="3" height="3" fill="#30d020"/><rect x="26.1" y="11.8" width="3" height="3" fill="#183a40"/><rect x="26.1" y="15.8" width="3" height="3" fill="#183a40"/><rect x="26.1" y="19.8" width="3" height="3" fill="#183a40"/><rect x="26.1" y="23.8" width="3" height="3" fill="#183a40"/><rect x="26.1" y="27.8" width="3" height="3" fill="#183a40"/></svg></div>
<div class="lbl" style="left:961px;top:639px">MBLOCKS</div>
<div class="ic" style="left:774px;top:664px"><svg width="32" height="32" viewBox="0 0 32 32"><rect x="0" y="0" width="32" height="32" fill="#000"/>
<rect x="1" y="1" width="30" height="30" fill="#e8e8e0"/>
<rect x="2" y="2" width="28" height="28" fill="#103858"/><rect x="3" y="3" width="5" height="5" fill="#30e010"/><rect x="4.5" y="4" width="2" height="3" fill="#80a070" opacity="0.7"/><rect x="3" y="10" width="5" height="5" fill="#30e010"/><rect x="4.5" y="11" width="2" height="3" fill="#80a070" opacity="0.7"/><rect x="3" y="17" width="5" height="5" fill="#30e010"/><rect x="4.5" y="18" width="2" height="3" fill="#80a070" opacity="0.7"/><rect x="3" y="24" width="5" height="5" fill="#30e010"/><rect x="4.5" y="25" width="2" height="3" fill="#80a070" opacity="0.7"/><rect x="10" y="3" width="5" height="5" fill="#30e010"/><rect x="11.5" y="4" width="2" height="3" fill="#80a070" opacity="0.7"/><rect x="10" y="10" width="5" height="5" fill="#30e010"/><rect x="11.5" y="11" width="2" height="3" fill="#80a070" opacity="0.7"/><rect x="10" y="17" width="5" height="5" fill="#a8a0a0"/><rect x="11.5" y="18" width="2" height="3" fill="#c0b0b0" opacity="0.7"/><rect x="10" y="24" width="5" height="5" fill="#30e010"/><rect x="11.5" y="25" width="2" height="3" fill="#80a070" opacity="0.7"/><rect x="17" y="3" width="5" height="5" fill="#30e010"/><rect x="18.5" y="4" width="2" height="3" fill="#80a070" opacity="0.7"/><rect x="17" y="10" width="5" height="5" fill="#30e010"/><rect x="18.5" y="11" width="2" height="3" fill="#80a070" opacity="0.7"/><rect x="17" y="17" width="5" height="5" fill="#30e010"/><rect x="18.5" y="18" width="2" height="3" fill="#80a070" opacity="0.7"/><rect x="17" y="24" width="5" height="5" fill="#30e010"/><rect x="18.5" y="25" width="2" height="3" fill="#80a070" opacity="0.7"/><rect x="24" y="3" width="5" height="5" fill="#30e010"/><rect x="25.5" y="4" width="2" height="3" fill="#80a070" opacity="0.7"/><rect x="24" y="10" width="5" height="5" fill="#30e010"/><rect x="25.5" y="11" width="2" height="3" fill="#80a070" opacity="0.7"/><rect x="24" y="17" width="5" height="5" fill="#30e010"/><rect x="25.5" y="18" width="2" height="3" fill="#80a070" opacity="0.7"/><rect x="24" y="24" width="5" height="5" fill="#30e010"/><rect x="25.5" y="25" width="2" height="3" fill="#80a070" opacity="0.7"/></svg></div>
<div class="lbl" style="left:784px;top:703px">15</div>
<div class="ic" style="left:838px;top:664px"><svg width="32" height="32" viewBox="0 0 32 32"><rect x="0" y="0" width="32" height="32" fill="#2a2a48"/>
<path d="M2 21 C2 16 7 14 10.5 12 C10.5 4 21 3 21.5 12 C25 14 30 16 30 21 C30 26 24 28.5 16 28.5 C8 28.5 2 26 2 21Z" fill="#dcd8c4" stroke="#b8a050" stroke-width="0.8" stroke-dasharray="1 0.8"/>
<path d="M5 15 C8 13 11 13.5 12 15.5 L20 15.5 C21 13.5 24 13 27 15 L26 18 H6Z" fill="#f0d890"/>
<circle cx="16" cy="10" r="5" fill="#b8bcc8"/>
<path d="M11.5 10 A4.5 4.5 0 0 1 19 6.5" stroke="#ffffff" stroke-width="1.3" fill="none"/>
<path d="M13 13 C15 15 18 15 20 12" stroke="#8088b0" stroke-width="1.2" fill="none"/>
<rect x="4" y="18" width="24" height="3.2" fill="#1838a0"/><rect x="4" y="18" width="24" height="1" fill="#3890f0"/><rect x="20" y="19" width="4" height="1" fill="#30c0a0"/>
<rect x="3" y="17" width="3" height="5" rx="1.2" fill="#d86010"/><rect x="26" y="17" width="3" height="5" rx="1.2" fill="#b05010"/>
<path d="M8 24.5 H24" stroke="#a8b0d0" stroke-width="1.5"/></svg></div>
<div class="lbl" style="left:842px;top:703px">PONG</div>
<div class="ic" style="left:902px;top:664px"><svg width="32" height="32" viewBox="0 0 32 32"><g fill="#fff" stroke="#101010" stroke-width="0.8"><circle cx="16.6" cy="6.3" r="4.2"/><circle cx="26.3" cy="16" r="4.2"/><circle cx="6.3" cy="26.3" r="4.2"/><circle cx="16.6" cy="26.3" r="4.2"/><circle cx="26.3" cy="26.3" r="4.2"/></g></svg></div>
<div class="lbl" style="left:903px;top:703px">LIFE2</div>
<div class="ic" style="left:966px;top:664px"><svg width="32" height="32" viewBox="0 0 32 32"><defs><radialGradient id="mg" cx="0.6" cy="0.35" r="0.75"><stop offset="0" stop-color="#f8f8f8"/><stop offset="0.4" stop-color="#a0a0a0"/><stop offset="1" stop-color="#181818"/></radialGradient></defs><circle cx="16.5" cy="17" r="13.3" fill="url(#mg)" stroke="#000" stroke-width="1"/>
<g stroke="#000" stroke-width="2.6" stroke-linecap="round"><path d="M16.5 1.5v3M2 17h3M28 17h3.2M6.3 6.8l2 2M26.7 6.8l-2 2M6.3 27.2l2-2M26.7 27.2l-2-2M16.5 29.5v2.5"/></g>
<g stroke="#f8f8f8" stroke-width="1" stroke-linecap="round"><path d="M16.5 2v2.5M2.5 17h2.5M28.5 17h2.5M6.8 7.3l1.5 1.5M26.2 7.3l-1.5 1.5M6.8 26.7l1.5-1.5M26.2 26.7l-1.5-1.5M16.5 30v1.5"/></g>
<g fill="#f0f0f0" stroke="#000" stroke-width="0.7"><ellipse cx="11.5" cy="12" rx="1.2" ry="1.5"/><ellipse cx="22" cy="12" rx="1.2" ry="1.5"/><ellipse cx="16.5" cy="18" rx="1.3" ry="1.6"/><ellipse cx="16.5" cy="27" rx="1" ry="1.3"/></g></svg></div>
<div class="lbl" style="left:970px;top:703px">MINE</div>
<style>
.mbar{position:absolute;left:172px;top:0;width:681px;height:20px;background:#000}
.mi{position:absolute;top:1px;height:18px;border:1px solid #d8d8d8;background:linear-gradient(#5c5c5c,#3e3e3e)}
.dot{position:absolute;width:8px;height:8px;border-radius:50%;background:radial-gradient(circle at 50% 55%,#ffff80 0,#f0f040 35%,#a0c820 80%,#80a010 100%)}
.mt{position:absolute;font-family:"Liberation Mono",monospace;font-size:11px;line-height:11px;letter-spacing:-0.6px;white-space:pre;color:#e8e8e8}
</style>
<div class="mbar"></div>
<div class="mi" style="left:173px;width:114px"></div>
<div class="a" style="left:176px;top:4px;width:12px;height:12px;background:rgba(0,0,0,0.12)"></div>
<div class="dot" style="left:178px;top:6px"></div>
<div class="mt" style="left:188px;top:6px">File Managers</div>
<div class="mi" style="left:286px;width:114px"></div>
<div class="a" style="left:289px;top:4px;width:12px;height:12px;background:rgba(0,0,0,0.12)"></div>
<div class="dot" style="left:291px;top:6px"></div>
<div class="mt" style="left:301px;top:6px">Development</div>
<div class="mi" style="left:399px;width:114px"></div>
<div class="a" style="left:402px;top:4px;width:12px;height:12px;background:rgba(0,0,0,0.12)"></div>
<div class="dot" style="left:404px;top:6px"></div>
<div class="mt" style="left:414px;top:6px">Documentation</div>
<div class="mi" style="left:512px;width:114px"></div>
<div class="a" style="left:515px;top:4px;width:12px;height:12px;background:rgba(0,0,0,0.12)"></div>
<div class="dot" style="left:517px;top:6px"></div>
<div class="mt" style="left:527px;top:6px">Skins</div>
<div class="mi" style="left:625px;width:114px"></div>
<div class="a" style="left:628px;top:4px;width:12px;height:12px;background:rgba(0,0,0,0.12)"></div>
<div class="dot" style="left:630px;top:6px"></div>
<div class="mt" style="left:640px;top:6px">NET</div>
<div class="mi" style="left:738px;width:114px"></div>
<div class="a" style="left:741px;top:4px;width:12px;height:12px;background:rgba(0,0,0,0.12)"></div>
<div class="dot" style="left:743px;top:6px"></div>
<div class="mt" style="left:753px;top:6px">Games</div>
<div class="a" style="left:398px;top:20px;width:116px;height:53px;background:#000"></div>
<div class="mi" style="left:399px;top:21px;width:114px;height:27px;background:linear-gradient(#585858,#3a3a3a)"></div>
<div class="a" style="left:403px;top:28px;width:10px;height:13px"><svg width="10" height="13" viewBox="0 0 10 13" shape-rendering="crispEdges"><path d="M1 0h8v1h1v8h-2v4h-6v-4h-2v-8h1z" fill="#fff"/><path d="M2 1h6v1h1v6h-2v4h-4v-4h-2v-6h1z" fill="#1818e8"/><path d="M3 2h4v1h1v3h-1v1h-2v1h-2v-2h1v-1h2v-2h-2v1h-2v-1h1z" fill="#ff8800"/><rect x="3" y="9" width="2" height="2" fill="#ff8800"/></svg></div>
<div class="mt" style="left:415px;top:30px">System Functions</div>
<div class="mi" style="left:399px;top:46px;width:114px;height:27px;background:linear-gradient(#6e6e6e,#4a4a4a)"></div>
<div class="a" style="left:403px;top:53px;width:10px;height:13px"><svg width="10" height="13" viewBox="0 0 10 13" shape-rendering="crispEdges"><path d="M1 0h8v1h1v8h-2v4h-6v-4h-2v-8h1z" fill="#fff"/><path d="M2 1h6v1h1v6h-2v4h-4v-4h-2v-6h1z" fill="#1818e8"/><path d="M3 2h4v1h1v3h-1v1h-2v1h-2v-2h1v-1h2v-2h-2v1h-2v-1h1z" fill="#ff8800"/><rect x="3" y="9" width="2" height="2" fill="#ff8800"/></svg></div>
<div class="mt" style="left:415px;top:55px">Hot Keys</div>
<style>
.win{position:absolute;background:#dedede;border:1px solid #a8a8a8}
.ttl{position:absolute;font-family:"Liberation Mono",monospace;font-size:11px;line-height:11px;letter-spacing:-0.6px;white-space:pre;color:#202020}
.btnl{position:absolute;background:#e8ecfc;border-right:1px solid #c4c8d8;border-bottom:1px solid #c4c8d8}
.lt{position:absolute;font-family:"Liberation Mono",monospace;font-size:15px;line-height:15px;white-space:pre;color:#000}
</style>
<div class="win" style="left:187px;top:145px;width:641px;height:477px"></div>
<div class="a" style="left:188px;top:146px;width:639px;height:19px;background:linear-gradient(#f0f0f0,#e0e0e0)"></div>
<div class="a" style="left:188px;top:165px;width:639px;height:1px;background:#b0b0b0"></div>
<div class="a" style="left:192px;top:166px;width:631px;height:451px;background:#fff"></div>
<div class="ttl" style="left:197px;top:152px">fNav 0.42.2</div>
<div class="a" style="left:794px;top:154px;width:8px;height:2px;background:#707070"></div>
<div class="a" style="left:810px;top:150px;width:11px;height:11px"><svg width="11" height="11"><path d="M1.5 1.5l7 7M8.5 1.5l-7 7" stroke="#646464" stroke-width="2.3"/></svg></div>
<div class="a" style="left:197px;top:171px;width:621px;height:29px;border:1px solid #8c8cf0"></div>
<div class="btnl" style="left:201px;top:175px;width:22px;height:22px"></div>
<div class="a" style="left:203px;top:177px;width:17px;height:17px;background:#fff"></div>
<div class="btnl" style="left:225px;top:175px;width:22px;height:22px"></div>
<div class="a" style="left:227px;top:177px;width:17px;height:17px;background:#fff"></div>
<div class="btnl" style="left:249px;top:175px;width:22px;height:22px"></div>
<div class="a" style="left:251px;top:177px;width:17px;height:17px;background:#fff"></div>
<div class="a" style="left:201px;top:175px;width:22px;height:22px"><svg width="22" height="22"><defs><linearGradient id="ag" x1="0" x2="1"><stop offset="0" stop-color="#5010f0"/><stop offset="1" stop-color="#e0d8ff"/></linearGradient></defs><path d="M2.5 10.7 L9.4 2.8 V7.2 H18.9 V13.4 H9.4 V18.5 Z" fill="url(#ag)" stroke="#5010e8" stroke-width="0.8"/></svg></div>
<div class="a" style="left:225px;top:175px;width:22px;height:22px"><svg width="22" height="22"><defs><linearGradient id="ag2" x1="1" x2="0"><stop offset="0" stop-color="#5010f0"/><stop offset="1" stop-color="#e0d8ff"/></linearGradient></defs><path d="M19.5 10.7 L12.6 2.8 V7.2 H3.1 V13.4 H12.6 V18.5 Z" fill="url(#ag2)" stroke="#5010e8" stroke-width="0.8"/></svg></div>
<div class="a" style="left:249px;top:175px;width:22px;height:22px"><svg width="22" height="22"><defs><linearGradient id="ag3" x1="0" y1="0" x2="0" y2="1"><stop offset="0" stop-color="#307030"/><stop offset="1" stop-color="#d0e8d0"/></linearGradient></defs><path d="M11 2.5 L19.2 9.6 H13.6 V18.9 H8.4 V9.6 H2.8 Z" fill="url(#ag3)" stroke="#307030" stroke-width="0.8"/></svg></div>
<div class="a" style="left:272px;top:178px;width:519px;height:15px;border:1px solid #8c8cf0;background:#fff"></div>
<div class="ttl" style="left:273px;top:181px;color:#000">/rd/1/</div>
<div class="btnl" style="left:793px;top:175px;width:22px;height:22px"></div>
<div class="a" style="left:795px;top:177px;width:17px;height:17px;background:#fff"></div>
<div class="a" style="left:793px;top:175px;width:22px;height:22px"><svg width="22" height="22"><defs><linearGradient id="ag4" x1="0" x2="1"><stop offset="0" stop-color="#d8f4e4"/><stop offset="0.6" stop-color="#40b880"/><stop offset="1" stop-color="#10a060"/></linearGradient></defs><path d="M18.5 10.7 L11.3 2.8 V7.2 H2.5 V13.4 H11.3 V18.5 Z" fill="url(#ag4)" stroke="#10a060" stroke-width="0.8"/></svg></div>
<div class="btnl" style="left:201px;top:208px;width:90px;height:17px"></div>
<div class="ttl" style="left:201px;top:212px;color:#000">/rd/1/</div>
<div class="btnl" style="left:201px;top:227px;width:90px;height:17px"></div>
<div class="ttl" style="left:201px;top:231px;color:#000">/fd/1/</div>
<div class="btnl" style="left:201px;top:246px;width:90px;height:17px"></div>
<div class="ttl" style="left:201px;top:250px;color:#000">/hd2/1/</div>
<div class="btnl" style="left:201px;top:265px;width:90px;height:17px"></div>
<div class="ttl" style="left:201px;top:269px;color:#000">/hd3/1/</div>
<div class="btnl" style="left:201px;top:284px;width:90px;height:17px"></div>
<div class="ttl" style="left:201px;top:288px;color:#000">/cd0/1/</div>
<div class="btnl" style="left:201px;top:303px;width:90px;height:17px"></div>
<div class="ttl" style="left:201px;top:307px;color:#000">/bd0/1/</div>
<div class="btnl" style="left:201px;top:322px;width:90px;height:17px"></div>
<div class="ttl" style="left:201px;top:326px;color:#000">/tmp1/1/</div>
<div class="btnl" style="left:761px;top:208px;width:54px;height:17px"></div>
<div class="ttl" style="left:761px;top:211px;color:#000">Cut</div>
<div class="btnl" style="left:761px;top:227px;width:54px;height:17px"></div>
<div class="ttl" style="left:761px;top:230px;color:#000">Copy</div>
<div class="btnl" style="left:761px;top:246px;width:54px;height:17px"></div>
<div class="ttl" style="left:761px;top:249px;color:#000">Paste</div>
<div class="btnl" style="left:761px;top:265px;width:54px;height:17px"></div>
<div class="ttl" style="left:761px;top:268px;color:#000">Delete</div>
<div class="btnl" style="left:298px;top:206px;width:21px;height:17px"></div>
<div class="btnl" style="left:320px;top:206px;width:118px;height:17px"></div>
<div class="ttl" style="left:366px;top:209px;color:#000">Name</div>
<div class="btnl" style="left:439px;top:206px;width:60px;height:17px"></div>
<div class="ttl" style="left:459px;top:209px;color:#000">Ext</div>
<div class="btnl" style="left:500px;top:206px;width:78px;height:17px"></div>
<div class="ttl" style="left:526px;top:209px;color:#000">Size</div>
<div class="btnl" style="left:579px;top:206px;width:105px;height:17px"></div>
<div class="ttl" style="left:618px;top:209px;color:#000">Date</div>
<div class="btnl" style="left:685px;top:206px;width:52px;height:17px"></div>
<div class="ttl" style="left:698px;top:209px;color:#000">Attr</div>
<div class="a" style="left:297px;top:227px;width:441px;height:359px;border:1px solid #8c8cf0;background:#fff"></div>
<div class="a" style="left:302px;top:230px"><svg width="13" height="17" viewBox="0 0 13 17"><defs><linearGradient id="fg" x1="0" y1="0" x2="0" y2="1"><stop offset="0" stop-color="#e8f0ff"/><stop offset="1" stop-color="#6080f0"/></linearGradient></defs><path d="M1 0.5h8l3.5 3.5v12a0.5 0.5 0 0 1 -0.5 0.5h-10.5a0.5 0.5 0 0 1 -0.5 -0.5v-15z" fill="url(#fg)" stroke="#7890e8" stroke-width="0.8"/></svg></div>
<div class="lt" style="left:319px;top:232px">HDREAD</div>
<div class="lt" style="left:516px;top:232px">  1 kb</div>
<div class="lt" style="left:586px;top:232px">13.09.2011</div>
<div class="lt" style="left:692px;top:232px">-A--</div>
<div class="a" style="left:302px;top:251px"><svg width="13" height="17" viewBox="0 0 13 17"><defs><linearGradient id="fg" x1="0" y1="0" x2="0" y2="1"><stop offset="0" stop-color="#e8f0ff"/><stop offset="1" stop-color="#6080f0"/></linearGradient></defs><path d="M1 0.5h8l3.5 3.5v12a0.5 0.5 0 0 1 -0.5 0.5h-10.5a0.5 0.5 0 0 1 -0.5 -0.5v-15z" fill="url(#fg)" stroke="#7890e8" stroke-width="0.8"/></svg></div>
<div class="lt" style="left:319px;top:253px">HTMLv</div>
<div class="lt" style="left:516px;top:253px"> 14 kb</div>
<div class="lt" style="left:586px;top:253px">10.02.2013</div>
<div class="lt" style="left:692px;top:253px">-A--</div>
<div class="a" style="left:302px;top:272px"><svg width="13" height="17" viewBox="0 0 13 17"><defs><linearGradient id="fg" x1="0" y1="0" x2="0" y2="1"><stop offset="0" stop-color="#e8f0ff"/><stop offset="1" stop-color="#6080f0"/></linearGradient></defs><path d="M1 0.5h8l3.5 3.5v12a0.5 0.5 0 0 1 -0.5 0.5h-10.5a0.5 0.5 0 0 1 -0.5 -0.5v-15z" fill="url(#fg)" stroke="#7890e8" stroke-width="0.8"/></svg></div>
<div class="lt" style="left:319px;top:274px">ICON</div>
<div class="lt" style="left:516px;top:274px">  3 kb</div>
<div class="lt" style="left:586px;top:274px">13.11.2012</div>
<div class="lt" style="left:692px;top:274px">-A--</div>
<div class="a" style="left:302px;top:293px"><svg width="13" height="17" viewBox="0 0 13 17"><defs><linearGradient id="fg" x1="0" y1="0" x2="0" y2="1"><stop offset="0" stop-color="#e8f0ff"/><stop offset="1" stop-color="#6080f0"/></linearGradient></defs><path d="M1 0.5h8l3.5 3.5v12a0.5 0.5 0 0 1 -0.5 0.5h-10.5a0.5 0.5 0 0 1 -0.5 -0.5v-15z" fill="url(#fg)" stroke="#7890e8" stroke-width="0.8"/></svg></div>
<div class="lt" style="left:319px;top:295px">ICONS.DAT</div>
<div class="lt" style="left:446px;top:295px">DAT</div>
<div class="lt" style="left:516px;top:295px">  2 kb</div>
<div class="lt" style="left:586px;top:295px">03.07.2012</div>
<div class="lt" style="left:692px;top:295px">-A--</div>
<div class="a" style="left:301px;top:315px"><svg width="15" height="15" viewBox="0 0 15 15"><defs><linearGradient id="sky" x1="0" y1="0" x2="0" y2="1"><stop offset="0" stop-color="#e8f8ff"/><stop offset="0.3" stop-color="#c8e8f0"/><stop offset="0.35" stop-color="#1a4a10"/><stop offset="0.55" stop-color="#2a6a20"/><stop offset="0.65" stop-color="#a8c8f0"/><stop offset="1" stop-color="#4a80e0"/></linearGradient></defs><rect x="0" y="0" width="15" height="14" rx="1" fill="url(#sky)"/><path d="M0 3 L4 5 L7 6.5 L11 4 L15 3 V8 L9 7 L5 8 L0 7Z" fill="#2a5a18"/><path d="M1 8 L5 9 L10 8 L14 10" stroke="#d8f0ff" stroke-width="1" fill="none"/><rect x="1" y="14" width="13" height="1" fill="#c09060"/></svg></div>
<div class="lt" style="left:319px;top:316px">ICONSTRP.PNG</div>
<div class="lt" style="left:446px;top:316px">PNG</div>
<div class="lt" style="left:516px;top:316px"> 15 kb</div>
<div class="lt" style="left:586px;top:316px">11.11.2012</div>
<div class="lt" style="left:692px;top:316px">-A--</div>
<div class="a" style="left:300px;top:340px"><svg width="18" height="8" viewBox="0 0 18 8"><path d="M5 0.8 L1.5 4 L5 7.2 M13 0.8 L16.5 4 L13 7.2" stroke="#1030e0" stroke-width="2" fill="none" stroke-dasharray="1.3 0.5"/><path d="M7 6.5 L11 1.5" stroke="#1030e0" stroke-width="2" stroke-dasharray="1.3 0.5"/></svg></div>
<div class="lt" style="left:319px;top:337px">INDEX.HTM</div>
<div class="lt" style="left:446px;top:337px">HTM</div>
<div class="lt" style="left:516px;top:337px">699  b</div>
<div class="lt" style="left:586px;top:337px">13.09.2011</div>
<div class="lt" style="left:692px;top:337px">-A--</div>
<div class="a" style="left:302px;top:356px"><svg width="13" height="17" viewBox="0 0 13 17"><defs><linearGradient id="fg" x1="0" y1="0" x2="0" y2="1"><stop offset="0" stop-color="#e8f0ff"/><stop offset="1" stop-color="#6080f0"/></linearGradient></defs><path d="M1 0.5h8l3.5 3.5v12a0.5 0.5 0 0 1 -0.5 0.5h-10.5a0.5 0.5 0 0 1 -0.5 -0.5v-15z" fill="url(#fg)" stroke="#7890e8" stroke-width="0.8"/></svg></div>
<div class="lt" style="left:319px;top:358px">KBD</div>
<div class="lt" style="left:516px;top:358px">  1 kb</div>
<div class="lt" style="left:586px;top:358px">13.11.2012</div>
<div class="lt" style="left:692px;top:358px">-A--</div>
<div class="a" style="left:302px;top:377px"><svg width="13" height="17" viewBox="0 0 13 17"><defs><linearGradient id="fg" x1="0" y1="0" x2="0" y2="1"><stop offset="0" stop-color="#e8f0ff"/><stop offset="1" stop-color="#6080f0"/></linearGradient></defs><path d="M1 0.5h8l3.5 3.5v12a0.5 0.5 0 0 1 -0.5 0.5h-10.5a0.5 0.5 0 0 1 -0.5 -0.5v-15z" fill="url(#fg)" stroke="#7890e8" stroke-width="0.8"/></svg></div>
<div class="lt" style="left:319px;top:379px">KERNEL.MNT</div>
<div class="lt" style="left:446px;top:379px">MNT</div>
<div class="lt" style="left:516px;top:379px"> 78 kb</div>
<div class="lt" style="left:586px;top:379px">08.03.2013</div>
<div class="lt" style="left:692px;top:379px">-A--</div>
<div class="a" style="left:302px;top:398px"><svg width="13" height="17" viewBox="0 0 13 17"><defs><linearGradient id="fg" x1="0" y1="0" x2="0" y2="1"><stop offset="0" stop-color="#e8f0ff"/><stop offset="1" stop-color="#6080f0"/></linearGradient></defs><path d="M1 0.5h8l3.5 3.5v12a0.5 0.5 0 0 1 -0.5 0.5h-10.5a0.5 0.5 0 0 1 -0.5 -0.5v-15z" fill="url(#fg)" stroke="#7890e8" stroke-width="0.8"/></svg></div>
<div class="lt" style="left:319px;top:400px">KERPACK</div>
<div class="lt" style="left:516px;top:400px">  6 kb</div>
<div class="lt" style="left:586px;top:400px">13.09.2011</div>
<div class="lt" style="left:692px;top:400px">-A--</div>
<div class="a" style="left:302px;top:419px"><svg width="13" height="17" viewBox="0 0 13 17"><defs><linearGradient id="fg" x1="0" y1="0" x2="0" y2="1"><stop offset="0" stop-color="#e8f0ff"/><stop offset="1" stop-color="#6080f0"/></linearGradient></defs><path d="M1 0.5h8l3.5 3.5v12a0.5 0.5 0 0 1 -0.5 0.5h-10.5a0.5 0.5 0 0 1 -0.5 -0.5v-15z" fill="url(#fg)" stroke="#7890e8" stroke-width="0.8"/></svg></div>
<div class="lt" style="left:319px;top:421px">KEYMAP.KEY</div>
<div class="lt" style="left:446px;top:421px">KEY</div>
<div class="lt" style="left:516px;top:421px">  3 kb</div>
<div class="lt" style="left:586px;top:421px">13.09.2011</div>
<div class="lt" style="left:692px;top:421px">-A--</div>
<div class="a" style="left:302px;top:440px"><svg width="13" height="17" viewBox="0 0 13 17"><defs><linearGradient id="fg" x1="0" y1="0" x2="0" y2="1"><stop offset="0" stop-color="#e8f0ff"/><stop offset="1" stop-color="#6080f0"/></linearGradient></defs><path d="M1 0.5h8l3.5 3.5v12a0.5 0.5 0 0 1 -0.5 0.5h-10.5a0.5 0.5 0 0 1 -0.5 -0.5v-15z" fill="url(#fg)" stroke="#7890e8" stroke-width="0.8"/></svg></div>
<div class="lt" style="left:319px;top:442px">KPACK</div>
<div class="lt" style="left:516px;top:442px"> 10 kb</div>
<div class="lt" style="left:586px;top:442px">28.01.2013</div>
<div class="lt" style="left:692px;top:442px">-A--</div>
<div class="a" style="left:302px;top:461px"><svg width="13" height="17" viewBox="0 0 13 17"><path d="M4.5 3 V13 M4.5 3 L10 1 V11" stroke="#3050c0" stroke-width="1.2" fill="none"/><ellipse cx="3" cy="13.5" rx="2.5" ry="2" fill="#3050c0"/><ellipse cx="8.5" cy="11.5" rx="2.5" ry="2" fill="#3050c0"/></svg></div>
<div class="lt" style="left:319px;top:463px">KUZKINA.MID</div>
<div class="lt" style="left:446px;top:463px">MID</div>
<div class="lt" style="left:516px;top:463px">456  b</div>
<div class="lt" style="left:586px;top:463px">13.09.2011</div>
<div class="lt" style="left:692px;top:463px">-A--</div>
<div class="a" style="left:302px;top:482px"><svg width="13" height="17" viewBox="0 0 13 17"><defs><linearGradient id="fg" x1="0" y1="0" x2="0" y2="1"><stop offset="0" stop-color="#e8f0ff"/><stop offset="1" stop-color="#6080f0"/></linearGradient></defs><path d="M1 0.5h8l3.5 3.5v12a0.5 0.5 0 0 1 -0.5 0.5h-10.5a0.5 0.5 0 0 1 -0.5 -0.5v-15z" fill="url(#fg)" stroke="#7890e8" stroke-width="0.8"/></svg></div>
<div class="lt" style="left:319px;top:484px">LANG.INC</div>
<div class="lt" style="left:446px;top:484px">INC</div>
<div class="lt" style="left:516px;top:484px"> 11  b</div>
<div class="lt" style="left:586px;top:484px">13.09.2011</div>
<div class="lt" style="left:692px;top:484px">-A--</div>
<div class="a" style="left:302px;top:503px"><svg width="13" height="17" viewBox="0 0 13 17"><defs><linearGradient id="fg" x1="0" y1="0" x2="0" y2="1"><stop offset="0" stop-color="#e8f0ff"/><stop offset="1" stop-color="#6080f0"/></linearGradient></defs><path d="M1 0.5h8l3.5 3.5v12a0.5 0.5 0 0 1 -0.5 0.5h-10.5a0.5 0.5 0 0 1 -0.5 -0.5v-15z" fill="url(#fg)" stroke="#7890e8" stroke-width="0.8"/></svg></div>
<div class="lt" style="left:319px;top:505px">LANG.INI</div>
<div class="lt" style="left:446px;top:505px">INI</div>
<div class="lt" style="left:516px;top:505px">322  b</div>
<div class="lt" style="left:586px;top:505px">13.09.2011</div>
<div class="lt" style="left:692px;top:505px">-A--</div>
<div class="a" style="left:302px;top:524px"><svg width="13" height="17" viewBox="0 0 13 17"><defs><linearGradient id="fg" x1="0" y1="0" x2="0" y2="1"><stop offset="0" stop-color="#e8f0ff"/><stop offset="1" stop-color="#6080f0"/></linearGradient></defs><path d="M1 0.5h8l3.5 3.5v12a0.5 0.5 0 0 1 -0.5 0.5h-10.5a0.5 0.5 0 0 1 -0.5 -0.5v-15z" fill="url(#fg)" stroke="#7890e8" stroke-width="0.8"/></svg></div>
<div class="lt" style="left:319px;top:526px">LAUNCHER</div>
<div class="lt" style="left:516px;top:526px">348  b</div>
<div class="lt" style="left:586px;top:526px">13.11.2012</div>
<div class="lt" style="left:692px;top:526px">-A--</div>
<div class="a" style="left:302px;top:545px"><svg width="13" height="17" viewBox="0 0 13 17"><defs><linearGradient id="fg" x1="0" y1="0" x2="0" y2="1"><stop offset="0" stop-color="#e8f0ff"/><stop offset="1" stop-color="#6080f0"/></linearGradient></defs><path d="M1 0.5h8l3.5 3.5v12a0.5 0.5 0 0 1 -0.5 0.5h-10.5a0.5 0.5 0 0 1 -0.5 -0.5v-15z" fill="url(#fg)" stroke="#7890e8" stroke-width="0.8"/></svg></div>
<div class="lt" style="left:319px;top:547px">MACROS.INC</div>
<div class="lt" style="left:446px;top:547px">INC</div>
<div class="lt" style="left:516px;top:547px">  8 kb</div>
<div class="lt" style="left:586px;top:547px">13.11.2012</div>
<div class="lt" style="left:692px;top:547px">-A--</div>
<div class="a" style="left:302px;top:566px"><svg width="13" height="17" viewBox="0 0 13 17"><defs><linearGradient id="fg" x1="0" y1="0" x2="0" y2="1"><stop offset="0" stop-color="#e8f0ff"/><stop offset="1" stop-color="#6080f0"/></linearGradient></defs><path d="M1 0.5h8l3.5 3.5v12a0.5 0.5 0 0 1 -0.5 0.5h-10.5a0.5 0.5 0 0 1 -0.5 -0.5v-15z" fill="url(#fg)" stroke="#7890e8" stroke-width="0.8"/></svg></div>
<div class="lt" style="left:319px;top:568px">MADMOUSE</div>
<div class="lt" style="left:516px;top:568px">145  b</div>
<div class="lt" style="left:586px;top:568px">13.11.2012</div>
<div class="lt" style="left:692px;top:568px">-A--</div>
<div class="a" style="left:737px;top:227px;width:17px;height:359px;border:1px solid #000;background:#ececec"></div>
<div class="a" style="left:737px;top:227px;width:17px;height:17px;border:1px solid #000;background:#6c8ef8"></div>
<div class="a" style="left:741px;top:232px"><svg width="10" height="7"><path d="M1 5.5 L9 5.5 L5 1.2Z" fill="#000"/></svg></div>
<div class="a" style="left:737px;top:569px;width:17px;height:17px;border:1px solid #000;background:#6c8ef8"></div>
<div class="a" style="left:741px;top:575px"><svg width="10" height="7"><path d="M1 1 L9 1 L5 5.3Z" fill="#000"/></svg></div>
<div class="a" style="left:737px;top:397px;width:17px;height:71px;border:1px solid #000;background:#6c8ef8"></div>
<div class="a" style="left:741px;top:429px;width:10px;height:1px;background:#000"></div>
<div class="a" style="left:740px;top:432px;width:12px;height:1px;background:#000"></div>
<div class="a" style="left:741px;top:435px;width:10px;height:1px;background:#000"></div>
<div class="ttl" style="left:461px;top:597px;color:#000">Files: 65    Dirs: 10</div>
<style>
.tb{position:absolute;left:0;top:744px;width:1024px;height:24px;background:linear-gradient(#52688f 0px,#52688f 2px,#6676a2 2px,#6676a2 21px,#4c5a86 24px)}
.tbb{position:absolute;top:746px;height:20px;border:1px solid #28385a;border-radius:3px}
.tbt{position:absolute;font-family:"Liberation Mono",monospace;font-size:11px;line-height:11px;letter-spacing:-0.6px;white-space:pre;color:#fff}
</style>
<div class="tb"></div>
<div class="a" style="left:2px;top:754px;width:0;height:0;border-top:3px solid transparent;border-bottom:3px solid transparent;border-right:5px solid #a8b4e0"></div>
<div class="tbb" style="left:10px;width:47px;background:#006400"></div>
<div class="a aa" style="left:18px;top:753px;font-family:'Liberation Sans',sans-serif;font-size:10px;line-height:10px;letter-spacing:0.5px;color:#fff">MENU</div>
<div class="tbb" style="left:60px;width:15px;background:#0a80ff"></div>
<div class="a" style="left:64px;top:752px"><svg width="7" height="10"><path d="M3.5 2v6" stroke="#fff" stroke-width="1.3"/><path d="M0.5 3.2 L3.5 0.2 L6.5 3.2Z M0.5 6.8 L3.5 9.8 L6.5 6.8Z" fill="#fff"/></svg></div>
<div class="tbb" style="left:82px;width:73px;background:#7282b0;box-shadow:inset 0 0 0 1px #8a9ac8"></div>
<div class="tbt" style="left:85px;top:751px">FNAV</div>
<div class="tbb" style="left:157px;width:73px;background:#7282b0;box-shadow:inset 0 0 0 1px #8a9ac8"></div>
<div class="tbt" style="left:160px;top:751px">TP</div>
<div class="tbb" style="left:232px;width:73px;background:#7282b0;box-shadow:inset 0 0 0 1px #8a9ac8"></div>
<div class="tbt" style="left:235px;top:751px">RunOD</div>
<div class="tbb" style="left:307px;width:73px;background:#7282b0;box-shadow:inset 0 0 0 1px #8a9ac8"></div>
<div class="tbt" style="left:310px;top:751px">TP</div>
<div class="tbb" style="left:953px;width:18px;background:#0a80ff"></div>
<div class="tbt" style="left:955px;top:751px">En</div>
<div class="tbb" style="left:973px;width:8px;background:linear-gradient(#006400 50%,#ff0000 50%)"></div>
<div class="tbb" style="left:983px;width:38px;background:#0a80ff"></div>
<div class="tbt" style="left:987px;top:751px">21:06</div>
<div class="win" style="left:284px;top:659px;width:457px;height:86px;background:#e0e0e0"></div>
<div class="a" style="left:285px;top:660px;width:455px;height:19px;background:linear-gradient(#f0f0f0,#e4e4e4)"></div>
<div class="a" style="left:285px;top:679px;width:455px;height:1px;background:#a8a8a8"></div>
<div class="ttl" style="left:300px;top:666px;font-family:'Liberation Sans',sans-serif;font-size:10px;line-height:10px;letter-spacing:0.3px">Run</div>
<div class="a" style="left:707px;top:668px;width:8px;height:2px;background:#707070"></div>
<div class="a" style="left:723px;top:664px;width:11px;height:11px"><svg width="11" height="11"><path d="M1.5 1.5l7 7M8.5 1.5l-7 7" stroke="#646464" stroke-width="2.3"/></svg></div>
<div class="ttl" style="left:352px;top:684px;color:#000">Type name of program, and Kolibri will run it for you</div>
<div class="a" style="left:294px;top:700px;width:436px;height:13px;background:#fffff4"></div>
<div class="ttl" style="left:296px;top:702px;color:#000">fillscr 0,160,255, 0,160,255, 80,80,160, 80,80,160</div>
<div class="a" style="left:294px;top:718px;width:43px;height:18px;background:#6a82b8;border-bottom:1px solid #4a5a88;border-right:1px solid #4a5a88"></div>
<div class="ttl" style="left:297px;top:722px;color:#fff">Browse</div>
<div class="ttl" style="left:345px;top:720px;color:#000">Program run successfully</div>
<div class="a" style="left:688px;top:718px;width:43px;height:18px;background:#6a82b8;border-bottom:1px solid #4a5a88;border-right:1px solid #4a5a88"></div>
<div class="ttl" style="left:700px;top:722px;color:#fff">Run</div>
<div class="a" style="left:472px;top:57px"><svg width="12" height="19" viewBox="0 0 12 19"><path d="M1 1 V15 L4.5 11.5 L7 17.5 L9 16.5 L6.5 10.5 H11 Z" fill="#fff" stroke="#000" stroke-width="1"/></svg></div>
</body></html>
